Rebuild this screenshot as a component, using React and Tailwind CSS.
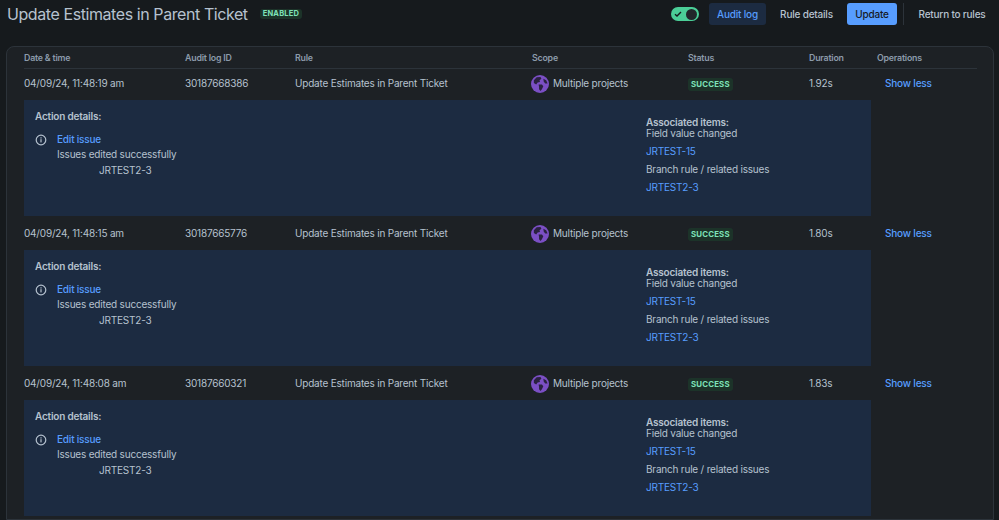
import React from "react";

const cols = "grid grid-cols-[161px_110px_237px_156px_121px_68px_100px] items-center";

const rows = [
  { date: "04/09/24, 11:48:19 am", id: "30187668386", duration: "1.92s" },
  { date: "04/09/24, 11:48:15 am", id: "30187665776", duration: "1.80s" },
  { date: "04/09/24, 11:48:08 am", id: "30187660321", duration: "1.83s" },
];

const Globe = () => (
  <svg width="18" height="18" viewBox="0 0 19 19" className="shrink-0">
    <circle cx="9.5" cy="9.5" r="9.5" fill="#7b4fc4" />
    <path d="M3 5.5 L6 2.5 L10 2 L11 4 L9 5.5 L9.5 7.5 L7 8 L5.5 10 L3 8.5 Z" fill="#2a2240" />
    <path d="M8 10 L11.5 10 L13 12 L11.5 15 L10 17 L8.5 15 L8.5 12.5 Z" fill="#2a2240" />
    <path d="M13 4 L16 5.5 L17.5 9 L15 9 L13.5 7 Z" fill="#2a2240" />
  </svg>
);

const InfoIcon = () => (
  <svg width="12" height="12" viewBox="0 0 12 12" fill="none" className="shrink-0">
    <circle cx="6" cy="6" r="4.8" stroke="#b6c2cf" strokeWidth="1.2" />
    <rect x="5.4" y="5.2" width="1.2" height="3.2" fill="#b6c2cf" />
    <rect x="5.4" y="3.3" width="1.2" height="1.2" fill="#b6c2cf" />
  </svg>
);

const Row = ({ row }) => (
  <div>
    <div className={`${cols} h-[29px] text-[#b6c2cf]`}>
      <div>{row.date}</div>
      <div>{row.id}</div>
      <div>Update Estimates in Parent Ticket</div>
      <div className="flex items-center gap-[4px] -ml-px">
        <Globe />
        <span>Multiple projects</span>
      </div>
      <div>
        <span className="inline-block rounded-[3px] bg-[#1c3329] px-[3px] text-[7.8px] leading-[13px] font-bold tracking-[0.2px] text-[#7ee2b8]">
          SUCCESS
        </span>
      </div>
      <div>{row.duration}</div>
      <div className="pl-2 font-medium text-[#579dff]">Show less</div>
    </div>
    <div className="mt-[2px] flex h-[116px] w-[847px] bg-[#1c2b41] pl-[11px] pt-[9px] text-[#b6c2cf]">
      <div className="w-[611px]">
        <div className="leading-[14px] font-semibold">Action details:</div>
        <div className="mt-[8px] flex">
          <div className="mt-[3px] w-[22px]">
            <InfoIcon />
          </div>
          <div>
            <div className="leading-[16px] font-medium text-[#579dff]">Edit issue</div>
            <div className="-mt-px leading-[16px]">Issues edited successfully</div>
            <div className="pl-[42px] leading-[16px]">JRTEST2-3</div>
          </div>
        </div>
      </div>
      <div className="pt-[8px]">
        <div className="leading-[11px] font-semibold">Associated items:</div>
        <div className="-mt-[2px] leading-[14px]">Field value changed</div>
        <div className="mt-1 leading-[14px] text-[#579dff]">JRTEST-15</div>
        <div className="mt-1 leading-[14px]">Branch rule / related issues</div>
        <div className="mt-1 leading-[14px] text-[#579dff]">JRTEST2-3</div>
      </div>
    </div>
  </div>
);

export default function App() {
  return (
    <div className="h-[520px] w-[999px] overflow-hidden bg-[#161a1d] font-['Inter',sans-serif] text-[10px] tracking-[-0.2px]">
      {/* Header */}
      <div className="flex h-[46px] items-start pl-[7px] pr-[13px]">
        <h1 className="pt-[2px] text-[16px] leading-[24px] font-normal tracking-[-0.42px] text-[#b6c2cf]">
          Update Estimates in Parent Ticket
        </h1>
        <span className="ml-3 mt-[9px] rounded-[3px] bg-[#1c3329] px-[3px] text-[7.5px] leading-[10px] font-bold tracking-[0.2px] text-[#7ee2b8]">
          ENABLED
        </span>
        <div className="ml-auto flex items-center pt-[3px]">
          <div className="flex h-[14px] w-[28px] items-center justify-between rounded-full bg-[#4bce97] px-[2px]">
            <svg width="10" height="10" viewBox="0 0 10 10" fill="none">
              <path d="M2 5.2 L4 7 L8 3" stroke="#161a1d" strokeWidth="1.4" />
            </svg>
            <span className="h-[11px] w-[11px] rounded-full bg-[#22272b]" />
          </div>
          <button className="ml-[10px] h-[22px] w-[57px] rounded-[3px] bg-[#1c2b41] font-medium text-[#579dff]">Audit log</button>
          <button className="ml-[14px] w-[53px] font-medium text-[#b6c2cf]">Rule details</button>
          <button className="ml-[14px] h-[22px] w-[50px] rounded-[3px] bg-[#579dff] font-medium text-[#161a1d]">Update</button>
          <div className="ml-[6px] h-[22px] w-px bg-[#2c333a]" />
          <button className="ml-[14px] w-[68px] font-medium text-[#b6c2cf]">Return to rules</button>
        </div>
      </div>

      {/* Audit log card */}
      <div className="ml-[6px] mr-[5px] rounded-t-[8px] border border-[#2c333a] bg-[#1d2125] pl-[17px]">
        <div className="mr-4 border-b border-[#2c333a]">
          <div className={`${cols} h-[21px] text-[8.8px] font-semibold text-[#8c9bab]`}>
            <div>Date &amp; time</div>
            <div>Audit log ID</div>
            <div>Rule</div>
            <div>Scope</div>
            <div>Status</div>
            <div>Duration</div>
            <div>Operations</div>
          </div>
        </div>
        {rows.map((row) => (
          <div key={row.id} className="mb-[3px]">
            <Row row={row} />
          </div>
        ))}
      </div>
    </div>
  );
}
